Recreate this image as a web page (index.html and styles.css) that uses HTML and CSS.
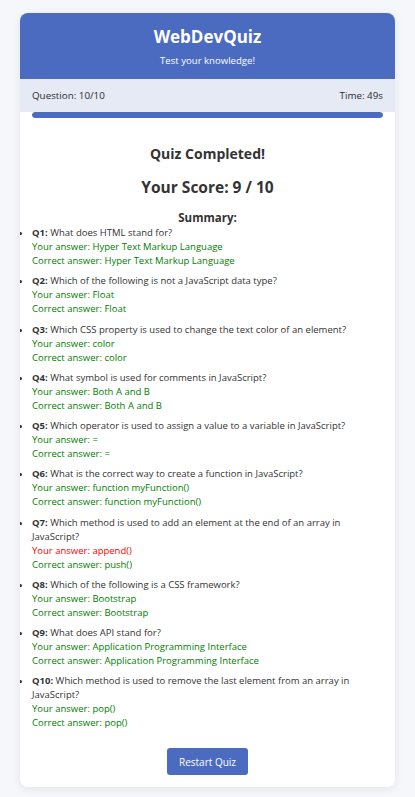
FILE: index.html
```html
<!DOCTYPE html>
<html lang="en">
<head>
<meta charset="utf-8">
<title>WebDevQuiz</title>
<link rel="stylesheet" href="styles.css">
</head>
<body>
<div class="card">
  <header class="header">
    <h1 class="title">WebDevQuiz</h1>
    <p class="subtitle">Test your knowledge!</p>
  </header>
  <div class="stats">
    <span>Question: 10/10</span>
    <span>Time: 49s</span>
  </div>
  <div class="progress"><div class="progress-fill" style="width:100%"></div></div>
  <main class="content">
    <h2 class="done">Quiz Completed!</h2>
    <h2 class="score">Your Score: 9 / 10</h2>
    <h3 class="summary-title">Summary:</h3>
    <ul class="summary">
      <li><p class="q"><b>Q1:</b> What does HTML stand for?</p><p class="ok">Your answer: Hyper Text Markup Language</p><p class="ok">Correct answer: Hyper Text Markup Language</p></li>
      <li><p class="q"><b>Q2:</b> Which of the following is not a JavaScript data type?</p><p class="ok">Your answer: Float</p><p class="ok">Correct answer: Float</p></li>
      <li><p class="q"><b>Q3:</b> Which CSS property is used to change the text color of an element?</p><p class="ok">Your answer: color</p><p class="ok">Correct answer: color</p></li>
      <li><p class="q"><b>Q4:</b> What symbol is used for comments in JavaScript?</p><p class="ok">Your answer: Both A and B</p><p class="ok">Correct answer: Both A and B</p></li>
      <li><p class="q"><b>Q5:</b> Which operator is used to assign a value to a variable in JavaScript?</p><p class="ok">Your answer: =</p><p class="ok">Correct answer: =</p></li>
      <li><p class="q"><b>Q6:</b> What is the correct way to create a function in JavaScript?</p><p class="ok">Your answer: function myFunction()</p><p class="ok">Correct answer: function myFunction()</p></li>
      <li><p class="q"><b>Q7:</b> Which method is used to add an element at the end of an array in JavaScript?</p><p class="bad">Your answer: append()</p><p class="ok">Correct answer: push()</p></li>
      <li><p class="q"><b>Q8:</b> Which of the following is a CSS framework?</p><p class="ok">Your answer: Bootstrap</p><p class="ok">Correct answer: Bootstrap</p></li>
      <li><p class="q"><b>Q9:</b> What does API stand for?</p><p class="ok">Your answer: Application Programming Interface</p><p class="ok">Correct answer: Application Programming Interface</p></li>
      <li><p class="q"><b>Q10:</b> Which method is used to remove the last element from an array in JavaScript?</p><p class="ok">Your answer: pop()</p><p class="ok">Correct answer: pop()</p></li>
    </ul>
    <div class="actions"><button class="restart" type="button">Restart Quiz</button></div>
  </main>
</div>
</body>
</html>
```
FILE: styles.css
```css
* { box-sizing: border-box; }
body {
  margin: 0;
  padding: 13px 20px 20px;
  background: #f5f7fb;
  font-family: "Open Sans", "Noto Sans", sans-serif;
  color: #333;
}
.card {
  background: #fff;
  border-radius: 8px;
  box-shadow: 0 2px 10px rgba(0, 0, 0, 0.08);
  overflow: hidden;
}
.header {
  background: #4b6bc1;
  color: #fff;
  text-align: center;
  padding: 12px 12px 11px;
}
.title {
  margin: 0;
  font-size: 17px;
  line-height: 24px;
  font-weight: 700;
}
.subtitle {
  margin: 5px 0 0;
  font-size: 9.6px;
  line-height: 14px;
}
.stats {
  background: #e6eaf4;
  height: 33px;
  padding: 0 12px;
  display: flex;
  justify-content: space-between;
  align-items: center;
  font-size: 9.8px;
  font-weight: 500;
  color: #2b2b2b;
}
.progress {
  margin: 0 12px;
  height: 6px;
  border-radius: 3px;
  background: #e6eaf4;
  overflow: hidden;
}
.progress-fill {
  height: 100%;
  background: #4b6bc1;
  border-radius: 3px;
}
.content {
  padding: 0 12px 12px;
}
.done {
  margin: 26px 0 0;
  text-align: center;
  font-size: 14px;
  line-height: 20px;
  font-weight: 700;
}
.score {
  margin: 12px 0 0;
  text-align: center;
  font-size: 15.5px;
  line-height: 22px;
  font-weight: 700;
}
.summary-title {
  margin: 12px 0 0;
  text-align: center;
  font-size: 11.5px;
  line-height: 16px;
  font-weight: 700;
}
.summary {
  margin: 0;
  padding: 0;
  font-size: 9.5px;
  line-height: 14px;
}
.summary li {
  margin: 0 0 6.25px;
}
.summary li:last-child { margin-bottom: 0; }
.summary p { margin: 0; }
.ok { color: #008000; }
.bad { color: #ff0000; }
.actions {
  display: flex;
  justify-content: center;
  margin-top: 18px;
}
.restart {
  background: #4b6bc1;
  color: #fff;
  border: 0;
  border-radius: 3px;
  font-family: inherit;
  font-size: 10px;
  line-height: 14px;
  padding: 0 12px;
  height: 27px;
  white-space: nowrap;
}
```
